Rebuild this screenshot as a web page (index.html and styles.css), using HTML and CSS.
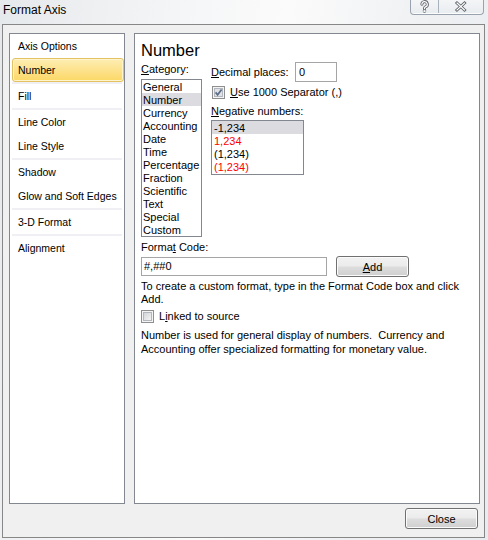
FILE: index.html
```html
<!DOCTYPE html>
<html>
<head>
<meta charset="utf-8">
<title>Format Axis</title>
<link rel="stylesheet" href="styles.css">
</head>
<body>
<div class="window">
  <div class="titlebar">
    <span class="title">Format Axis</span>
    <div class="caption-btns">
      <span class="cbtn help">
        <svg width="27" height="13" viewBox="0 0 27 13">
          <g transform="translate(13.5 6.5)" fill="none" stroke-linecap="round">
            <path class="ol" d="M-2.6 -2.2 A2.7 2.7 0 1 1 0.9 0.4 C0 0.8 0 1.2 0 2.2"/>
            <circle class="ol" cx="0" cy="4.6" r="0.3"/>
            <path class="in" d="M-2.6 -2.2 A2.7 2.7 0 1 1 0.9 0.4 C0 0.8 0 1.2 0 2.2"/>
            <circle class="in" cx="0" cy="4.6" r="0.3"/>
          </g>
        </svg>
      </span>
      <span class="cbtn close">
        <svg width="44" height="13" viewBox="0 0 44 13">
          <g fill="none" stroke-linecap="square">
            <path class="ol" d="M18 3 L25.5 10 M25.5 3 L18 10"/>
            <path class="in" d="M18 3 L25.5 10 M25.5 3 L18 10"/>
          </g>
        </svg>
      </span>
    </div>
  </div>

  <div class="frame">
    <div class="panels">
      <div class="nav">
        <div class="nav-item">Axis Options</div>
        <div class="nav-item selected">Number</div>
        <div class="nav-sep"></div>
        <div class="nav-item">Fill</div>
        <div class="nav-sep"></div>
        <div class="nav-item">Line Color</div>
        <div class="nav-item">Line Style</div>
        <div class="nav-sep"></div>
        <div class="nav-item">Shadow</div>
        <div class="nav-item">Glow and Soft Edges</div>
        <div class="nav-sep"></div>
        <div class="nav-item">3-D Format</div>
        <div class="nav-sep"></div>
        <div class="nav-item">Alignment</div>
      </div>

      <div class="content">
        <h2 class="heading">Number</h2>
        <div class="cols">
          <div class="col-left">
            <div class="label"><u>C</u>ategory:</div>
            <div class="listbox category">
              <div class="opt">General</div>
              <div class="opt selected">Number</div>
              <div class="opt">Currency</div>
              <div class="opt">Accounting</div>
              <div class="opt">Date</div>
              <div class="opt">Time</div>
              <div class="opt">Percentage</div>
              <div class="opt">Fraction</div>
              <div class="opt">Scientific</div>
              <div class="opt">Text</div>
              <div class="opt">Special</div>
              <div class="opt">Custom</div>
            </div>
          </div>
          <div class="col-right">
            <div class="row-dec">
              <span class="dec-label"><u>D</u>ecimal places:</span>
              <span class="textbox dec-input">0</span>
            </div>
            <div class="check-row sep-row">
              <svg class="checkbox" width="13" height="13" viewBox="0 0 13 13">
                <rect x="0.5" y="0.5" width="12" height="12" fill="#f4f4f4" stroke="#8e8f8f"/>
                <rect x="2.5" y="2.5" width="8" height="8" fill="#dfe2e6" stroke="#b3b7bd"/>
                <path d="M3.6 6.4 L5.6 8.8 L9.6 3.4" fill="none" stroke="#5d6d88" stroke-width="1.7"/>
              </svg>
              <span class="check-text"><u>U</u>se 1000 Separator (,)</span>
            </div>
            <div class="label neg-label"><u>N</u>egative numbers:</div>
            <div class="listbox negative">
              <div class="opt selected">-1,234</div>
              <div class="opt red">1,234</div>
              <div class="opt">(1,234)</div>
              <div class="opt red">(1,234)</div>
            </div>
          </div>
        </div>

        <div class="label fc-label">Forma<u>t</u> Code:</div>
        <div class="fc-row">
          <span class="textbox fc-input">#,##0</span>
          <button class="btn add-btn"><u>A</u>dd</button>
        </div>
        <p class="desc">To create a custom format, type in the Format Code box and click Add.</p>
        <div class="check-row linked-row">
          <svg class="checkbox" width="13" height="13" viewBox="0 0 13 13">
            <defs>
              <linearGradient id="cbg" x1="0" y1="0" x2="1" y2="1">
                <stop offset="0" stop-color="#d0d3d6"/>
                <stop offset="1" stop-color="#f6f6f6"/>
              </linearGradient>
            </defs>
            <rect x="0.5" y="0.5" width="12" height="12" fill="#f4f4f4" stroke="#8e8f8f"/>
            <rect x="2.5" y="2.5" width="8" height="8" fill="url(#cbg)" stroke="#b3b7bd"/>
          </svg>
          <span class="check-text">L<u>i</u>nked to source</span>
        </div>
        <p class="info">Number is used for general display of numbers.&nbsp; Currency and Accounting offer specialized formatting for monetary value.</p>
      </div>
    </div>
    <div class="footer">
      <button class="btn close-btn">Close</button>
    </div>
  </div>
</div>
</body>
</html>
```

FILE: styles.css
```css
html, body {
  margin: 0;
  padding: 0;
}

body {
  width: 488px;
  height: 540px;
  overflow: hidden;
  font-family: "Liberation Sans", Arial, sans-serif;
  font-size: 11px;
  color: #000;
  background: linear-gradient(100deg, #e6e9ec 0%, #f6f7f8 35%, #fbfbfb 50%, #eef0f2 75%, #e9ecef 100%);
}

.window {
  width: 488px;
  height: 540px;
}

.titlebar {
  height: 24px;
  display: flex;
  justify-content: space-between;
  align-items: flex-start;
}

.title {
  font-size: 12px;
  line-height: 14px;
  padding-top: 3px;
  margin-left: 3px;
  color: #000;
}

.caption-btns {
  display: flex;
  height: 14px;
  margin-right: 4px;
  border: 1px solid #9aa3ad;
  border-top: none;
  border-radius: 0 0 4px 4px;
  background: linear-gradient(#f3f5f7, #e9ecef);
  box-shadow: inset 0 -1px 0 #fbfcfd;
}

.cbtn {
  display: block;
  height: 13px;
}

.cbtn svg {
  display: block;
}

.cbtn.help {
  width: 27px;
}

.cbtn.close {
  width: 44px;
  border-left: 1px solid #a9b1ba;
}

.cbtn .ol {
  stroke: #5f6368;
  stroke-width: 3;
}

.cbtn .in {
  stroke: #ffffff;
  stroke-width: 1.2;
}

.frame {
  box-sizing: border-box;
  height: 514px;
  margin: 0 3px 0 2px;
  border: 1px solid #878787;
  background: #f0f0f0;
  padding: 8px 4px 8px 6px;
}

.panels {
  display: flex;
  gap: 9px;
  height: 471px;
}

.nav {
  box-sizing: border-box;
  width: 116px;
  height: 471px;
  border: 1px solid #828790;
  background: #fff;
  font-size: 10.5px;
}

.nav-item {
  height: 24px;
  line-height: 24px;
  padding-left: 8px;
  white-space: nowrap;
}

.nav-item.selected {
  box-sizing: border-box;
  margin: 0 0 0 2px;
  padding-left: 5px;
  line-height: 22px;
  border: 1px solid #e3c263;
  border-radius: 3px;
  background: linear-gradient(#fdeeb3 0%, #fde391 45%, #fbd865 100%);
  box-shadow: inset 0 0 0 1px #fff4cc;
}

.nav-sep {
  height: 2px;
  margin: 0 2px;
  background: #f0f0f4;
}

.content {
  box-sizing: border-box;
  flex: 1;
  height: 471px;
  border: 1px solid #828790;
  background: #fff;
  padding: 6px 6px 0 6px;
}

.heading {
  margin: 0 0 2px;
  font-size: 16.5px;
  line-height: 20px;
  font-weight: normal;
}

.cols {
  display: flex;
  gap: 9px;
}

.col-left {
  width: 61px;
}

.label {
  line-height: 14px;
  white-space: nowrap;
}

.listbox {
  box-sizing: border-box;
  border: 1px solid #828790;
  background: #fff;
}

.listbox .opt {
  height: 13px;
  line-height: 15px;
  padding-left: 1px;
  white-space: nowrap;
}

.listbox .opt.selected {
  background: #dcdce0;
}

.listbox .opt.red {
  color: #ff0000;
}

.category {
  margin-top: 3px;
  width: 61px;
  height: 158px;
}

.row-dec {
  display: flex;
  align-items: center;
  height: 20px;
}

.dec-label {
  width: 84px;
  white-space: nowrap;
}

.textbox {
  box-sizing: border-box;
  display: block;
  border: 1px solid #a5a5a5;
  background: #fff;
  padding-left: 3px;
}

.dec-input {
  width: 42px;
  height: 20px;
  line-height: 18px;
}

.check-row {
  display: flex;
  align-items: center;
  height: 13px;
}

.check-row .checkbox {
  display: block;
  flex: none;
}

.check-text {
  margin-left: 5px;
  line-height: 13px;
  white-space: nowrap;
}

.sep-row {
  margin-top: 4px;
  padding-left: 1px;
}

.neg-label {
  margin-top: 5px;
}

.negative {
  margin-top: 2px;
  width: 93px;
  height: 55px;
}

.negative .opt {
  padding-left: 2px;
}

.fc-label {
  margin-top: 3px;
}

.fc-row {
  display: flex;
  align-items: center;
  height: 21px;
  margin-top: 2px;
}

.fc-input {
  width: 186px;
  height: 19px;
  line-height: 17px;
  padding-left: 2px;
}

.btn {
  box-sizing: border-box;
  height: 21px;
  width: 73px;
  padding: 0;
  font-family: "Liberation Sans", Arial, sans-serif;
  font-size: 11px;
  color: #000;
  border: 1px solid #707070;
  border-radius: 3px;
  background: linear-gradient(#f2f2f2 0%, #ebebeb 48%, #dddddd 52%, #cfcfcf 100%);
  box-shadow: inset 0 0 0 1px #fbfbfb;
}

.add-btn {
  margin-left: 9px;
}

.desc {
  margin: 3px 0 0;
  line-height: 13px;
}

.linked-row {
  margin-top: 4px;
}

.info {
  margin: 5px 0 0;
  line-height: 14px;
}

.footer {
  display: flex;
  justify-content: flex-end;
  margin-top: 4px;
  padding-right: 2px;
}
```
